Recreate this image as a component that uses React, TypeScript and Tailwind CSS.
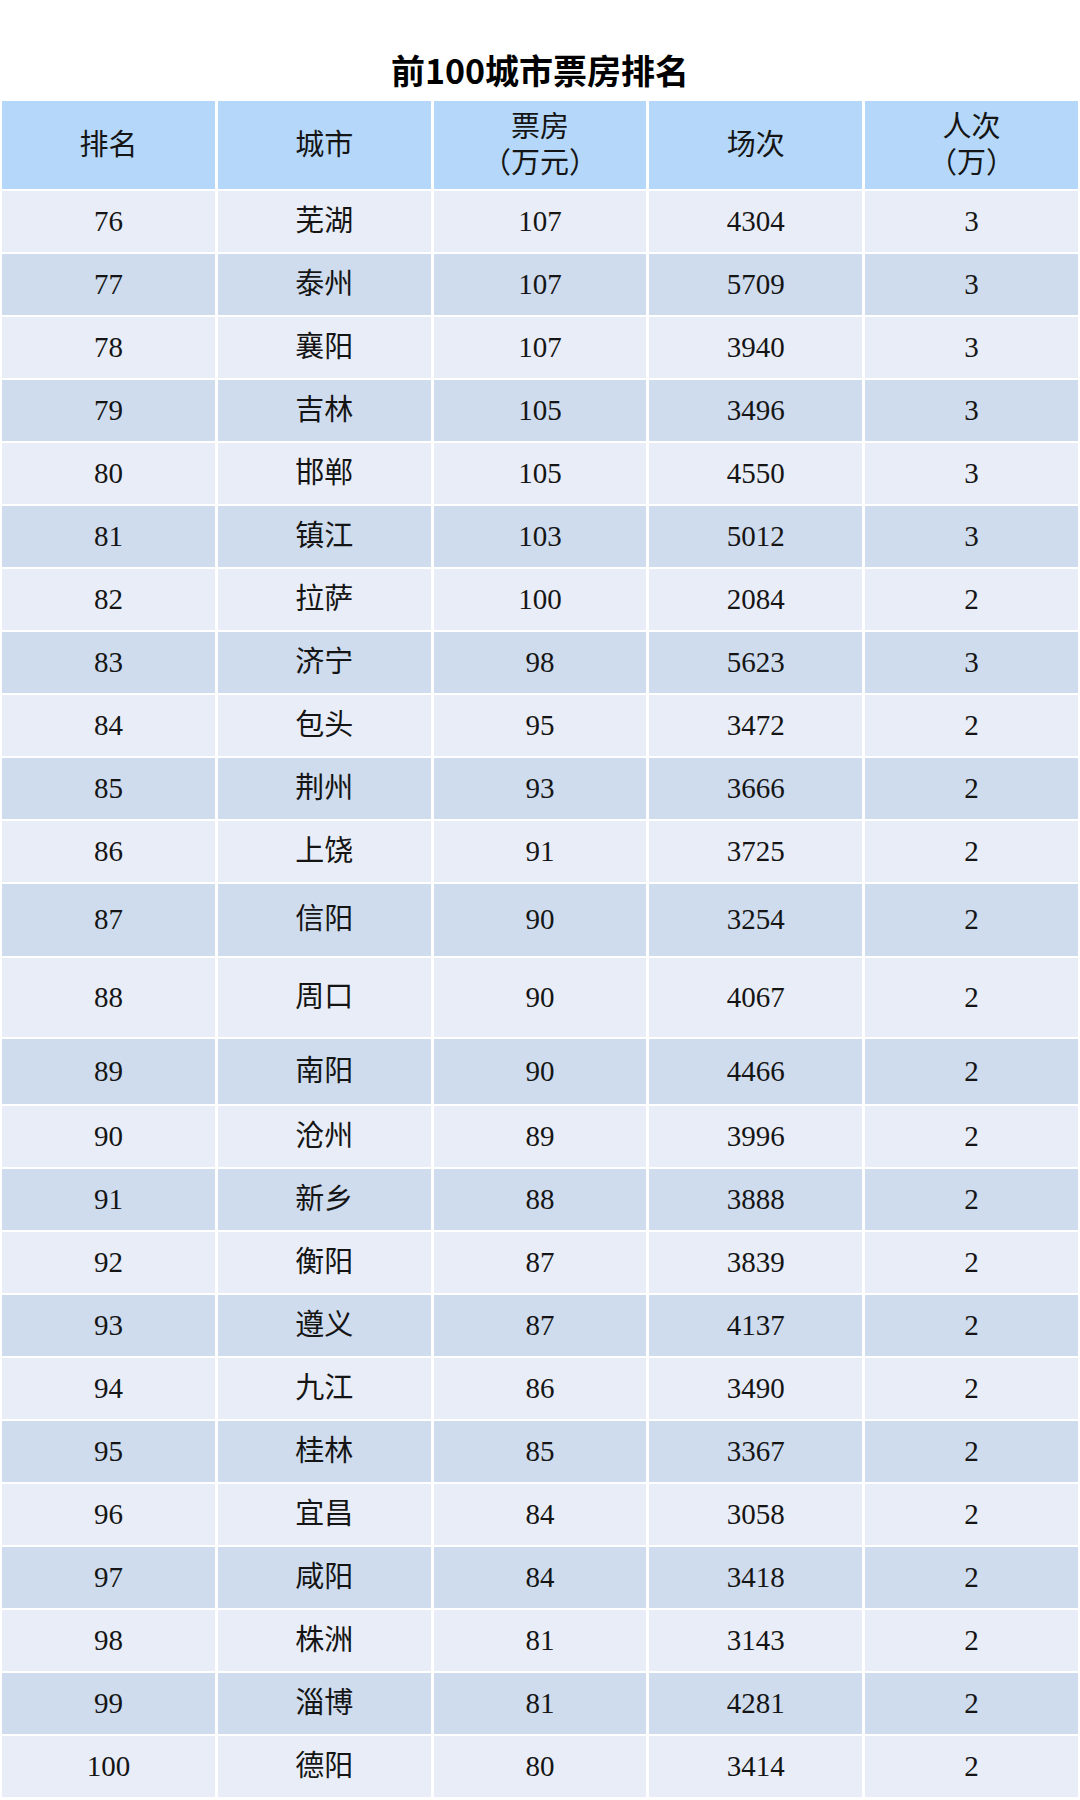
const rows: [string, string, string, string, string][] = [
  ["76", "芜湖", "107", "4304", "3"],
  ["77", "泰州", "107", "5709", "3"],
  ["78", "襄阳", "107", "3940", "3"],
  ["79", "吉林", "105", "3496", "3"],
  ["80", "邯郸", "105", "4550", "3"],
  ["81", "镇江", "103", "5012", "3"],
  ["82", "拉萨", "100", "2084", "2"],
  ["83", "济宁", "98", "5623", "3"],
  ["84", "包头", "95", "3472", "2"],
  ["85", "荆州", "93", "3666", "2"],
  ["86", "上饶", "91", "3725", "2"],
  ["87", "信阳", "90", "3254", "2"],
  ["88", "周口", "90", "4067", "2"],
  ["89", "南阳", "90", "4466", "2"],
  ["90", "沧州", "89", "3996", "2"],
  ["91", "新乡", "88", "3888", "2"],
  ["92", "衡阳", "87", "3839", "2"],
  ["93", "遵义", "87", "4137", "2"],
  ["94", "九江", "86", "3490", "2"],
  ["95", "桂林", "85", "3367", "2"],
  ["96", "宜昌", "84", "3058", "2"],
  ["97", "咸阳", "84", "3418", "2"],
  ["98", "株洲", "81", "3143", "2"],
  ["99", "淄博", "81", "4281", "2"],
  ["100", "德阳", "80", "3414", "2"],
];

// a few rows in the source image are taller than the rest
function rowHeight(rank: string) {
  if (rank === "87") return "h-[72px]";
  if (rank === "88") return "h-[79px]";
  if (rank === "89") return "h-[65px]";
  return "h-[61px]";
}

const headers = [["排名"], ["城市"], ["票房", "（万元）"], ["场次"], ["人次", "（万）"]];

export default function App() {
  return (
    <div className="w-[1080px] h-[1800px] bg-white font-['Liberation_Serif','Noto_Sans_CJK_SC',serif] text-[#151515]">
      <div className="h-[101px] pt-[48px] flex justify-center">
        <h1 className="h-[44px] leading-[44px] text-[34px] font-bold font-['Noto_Sans_CJK_SC',sans-serif] text-black">
          前100城市票房排名
        </h1>
      </div>

      <div className="flex flex-col gap-[2px] px-[2px]">
        <div className="grid grid-cols-5 gap-x-[3px] h-[88px]">
          {headers.map((lines, i) => (
            <div key={i} className="bg-[#b5d8fa] flex flex-col items-center justify-center text-[29px] leading-[36px]">
              {lines.map((l) => (
                <span key={l}>{l}</span>
              ))}
            </div>
          ))}
        </div>

        {rows.map((r, idx) => (
          <div key={r[0]} className={`grid grid-cols-5 gap-x-[3px] ${rowHeight(r[0])}`}>
            {r.map((cell, j) => (
              <div
                key={j}
                className={`flex items-center justify-center text-[29px] ${idx % 2 === 0 ? "bg-[#e9edf7]" : "bg-[#cfdcee]"}`}
              >
                {cell}
              </div>
            ))}
          </div>
        ))}
      </div>
    </div>
  );
}
